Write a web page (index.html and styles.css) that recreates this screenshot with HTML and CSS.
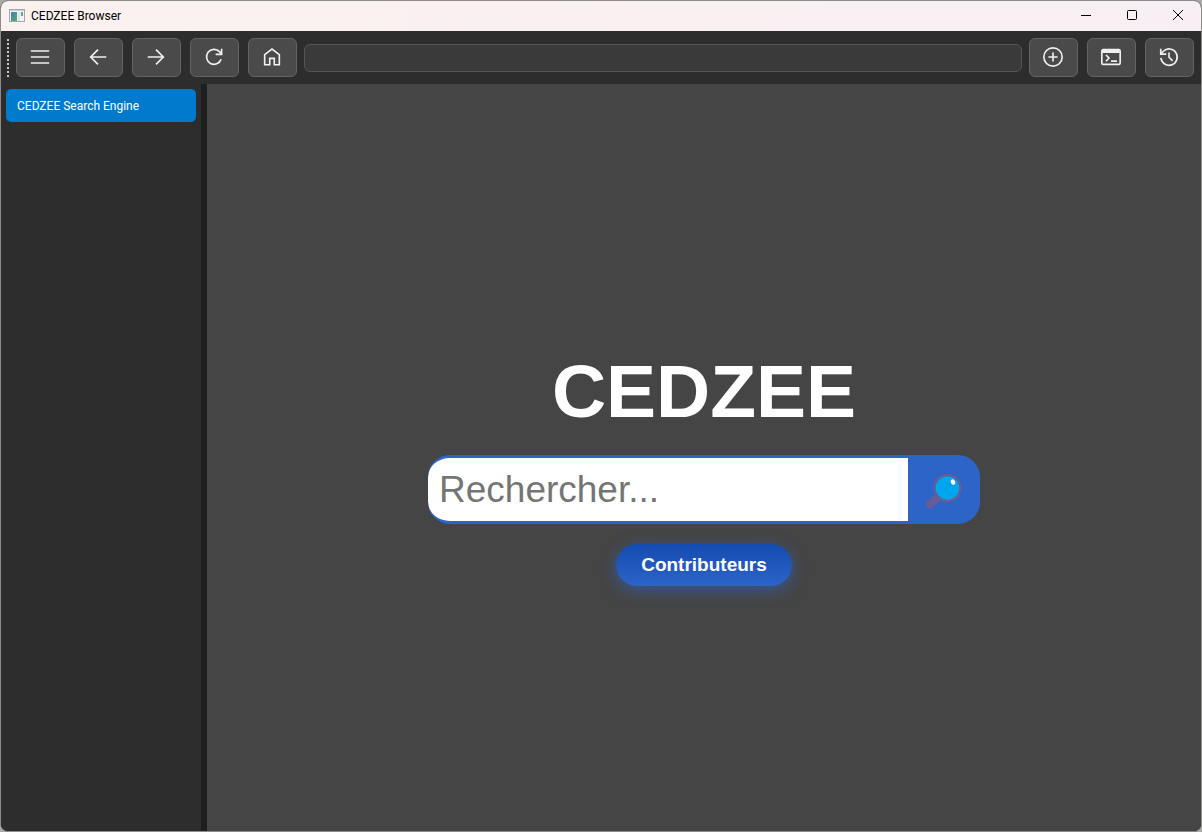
FILE: index.html
```html
<!DOCTYPE html>
<html lang="fr">
<head>
<meta charset="utf-8">
<title>CEDZEE Browser</title>
<link rel="stylesheet" href="styles.css">
</head>
<body>
<div class="window">
  <header class="titlebar">
    <svg class="app-icon" viewBox="0 0 16 14" aria-hidden="true">
      <defs><linearGradient id="app" x1="0" y1="0" x2="1" y2="1"><stop offset="0" stop-color="#4a78b8"/><stop offset="1" stop-color="#4fae6c"/></linearGradient></defs>
      <rect x=".5" y=".5" width="15" height="12" fill="#f4f4f4" stroke="#a2a8ae"/>
      <path d="M1 1.5h14" stroke="#c9ced3"/>
      <rect x="2" y="3" width="6" height="9" fill="url(#app)"/>
      <rect x="9" y="3" width="2" height="9" fill="#dfe3e6"/>
      <rect x="12" y="3" width="2" height="4" fill="#59a88a"/>
    </svg>
    <span class="title">CEDZEE Browser</span>
    <div class="controls">
      <button class="control" aria-label="Réduire"><svg viewBox="0 0 12 12"><path d="M1 5.5h10"/></svg></button>
      <button class="control" aria-label="Agrandir"><svg viewBox="0 0 12 12"><rect x="1.5" y=".5" width="9" height="9" rx="1"/></svg></button>
      <button class="control" aria-label="Fermer"><svg viewBox="0 0 12 12"><path d="M1 0l10 10M11 0L1 10"/></svg></button>
    </div>
  </header>
  <nav class="toolbar">
    <span class="grip"></span>
    <div class="group">
      <button class="tool" aria-label="Menu"><svg viewBox="0 0 24 24"><path d="M2 5.500h20M2 12h20M2 18.500h20"/></svg></button>
      <button class="tool" aria-label="Précédent"><svg viewBox="0 0 24 24"><path d="M21 12H4.500M12 4L4 12l8 8"/></svg></button>
      <button class="tool" aria-label="Suivant"><svg viewBox="0 0 24 24"><path d="M3 12h16.500M12 4l8 8-8 8"/></svg></button>
      <button class="tool" aria-label="Actualiser"><svg viewBox="0 0 24 24"><path d="M19.800 14.500A8.200 8.200 0 1 1 18 6.200L20 8.400M20.300 3v6.200h-6.500"/></svg></button>
      <button class="tool" aria-label="Accueil"><svg viewBox="0 0 24 24"><path d="M4 20.500V9.500L12 3.300l8 6.200v11h-5.500v-7h-5v7z"/></svg></button>
    </div>
    <input class="address" type="text" aria-label="Adresse">
    <div class="group">
      <button class="tool" aria-label="Nouvel onglet"><svg viewBox="0 0 24 24"><circle cx="12" cy="12" r="10"/><path d="M12 7v10M7 12h10"/></svg></button>
      <button class="tool" aria-label="Console"><svg viewBox="0 0 24 24"><rect x="2" y="4" width="20" height="16" rx="1.500"/><path d="M2.500 5.800h19" stroke-width="3.500"/><path d="M6.500 9.800l3.400 3.400-3.400 3.400M12 16.500h6.500"/></svg></button>
      <button class="tool" aria-label="Historique"><svg viewBox="0 0 24 24"><path d="M3.200 13a8.900 8.900 0 1 0 2.700-7.300L3.200 8.400M3 3v5.800H9M12 7v5.300l4 4"/></svg></button>
    </div>
  </nav>
  <div class="body">
    <aside class="sidebar">
      <button class="tab">CEDZEE Search Engine</button>
    </aside>
    <main class="page">
      <h1 class="heading">CEDZEE</h1>
      <form class="search">
        <input class="query" type="text" placeholder="Rechercher..." aria-label="Rechercher">
        <button class="submit" type="button" aria-label="Lancer la recherche">
          <svg viewBox="0 0 38 38" aria-hidden="true">
            <path d="M13 25L15.500 22.500" stroke="#675c9a" stroke-width="4"/>
            <path d="M11.500 26.500L5 32.500" stroke="#675c9a" stroke-width="8" stroke-linecap="round"/>
            <circle cx="22.500" cy="16" r="13" fill="#00a6ed" stroke="#675c9a" stroke-width="2.500"/>
            <ellipse cx="28" cy="10" rx="2.100" ry="2.800" fill="#fff" transform="rotate(-25 28 10)"/>
          </svg>
        </button>
      </form>
      <a class="contributors" href="#">Contributeurs</a>
    </main>
  </div>
</div>
</body>
</html>
```
FILE: styles.css
```css
* { box-sizing: border-box; }
body {
  margin: 0;
  background: #a9a9a6;
  font-family: Roboto, "Noto Sans", sans-serif;
}
button, input { font: inherit; margin: 0; }
.window {
  display: flex;
  flex-direction: column;
  height: 100vh;
  border: 1px solid #8c8c89;
  border-radius: 8px;
  overflow: hidden;
  background: #2d2d2d;
}
.titlebar {
  display: flex;
  align-items: center;
  height: 30px;
  padding-left: 8px;
  background: linear-gradient(90deg, #fbf1ef, #f8eff4);
  color: #000;
  font-size: 12px;
}
.app-icon { width: 16px; height: 14px; margin-right: 6px; }
.title { flex: 1; }
.controls { display: flex; }
.control {
  display: grid;
  place-items: center;
  width: 46px;
  height: 30px;
  padding: 0;
  border: 0;
  background: none;
}
.control svg { width: 12px; height: 12px; overflow: visible; fill: none; stroke: #000; }
.toolbar {
  display: flex;
  align-items: center;
  gap: 7px;
  height: 53px;
  padding: 0 7px 0 6px;
  background: #2d2d2d;
}
.grip {
  width: 2px;
  height: 38px;
  background: repeating-linear-gradient(#c8c8c8 0 2px, transparent 2px 4px);
}
.group { display: flex; gap: 9px; }
.tool {
  display: grid;
  place-items: center;
  width: 49px;
  height: 39px;
  padding: 0 1px 1px 0;
  border: 1px solid #646464;
  border-radius: 6px;
  background: #4a4a4a;
}
.tool svg {
  width: 22px;
  height: 22px;
  fill: none;
  stroke: #f0f0f0;
  stroke-width: 1.8;
}
.address {
  flex: 1;
  min-width: 0;
  height: 28px;
  padding: 0 8px;
  border: 1px solid #555;
  border-radius: 6px;
  background: #3a3a3a;
  color: #fff;
}
.body { display: flex; flex: 1; min-height: 0; }
.sidebar {
  width: 206px;
  padding: 5px;
  border-right: 6px solid #1e1e1e;
  background: #2d2d2d;
}
.tab {
  width: 100%;
  height: 33px;
  padding: 0 11px;
  border: 0;
  border-radius: 5px;
  background: #007acc;
  color: #fff;
  font-size: 12px;
  text-align: left;
}
.page {
  display: flex;
  flex: 1;
  flex-direction: column;
  align-items: center;
  justify-content: center;
  gap: 20px;
  background: #454545;
  font-family: "Liberation Sans", Arial, sans-serif;
}
.heading {
  margin: 0;
  padding: 19px 0 1px;
  color: #fff;
  font-size: 75px;
  line-height: 86px;
}
.search {
  display: flex;
  width: 552px;
  max-width: 100%;
  height: 69px;
  border-radius: 22px;
  overflow: hidden;
  background: #2c64c8;
}
.query {
  flex: 1;
  min-width: 0;
  padding: 0 11px;
  border: solid #2c64c8;
  border-width: 3px 0;
  border-radius: 22px 0 0 22px;
  background: #fff;
  font-size: 37px;
}
.query::placeholder { color: #757575; }
.submit {
  display: grid;
  place-items: center;
  width: 72px;
  padding: 3px 0 0;
  border: 0;
  background: none;
}
.submit svg { width: 38px; height: 38px; }
.contributors {
  padding: 0 25px;
  border-radius: 21px;
  background: linear-gradient(#144bb0, #2c64c8);
  box-shadow: 0 4px 15px rgba(44, 100, 200, .6);
  color: #fff;
  font-size: 19px;
  font-weight: 700;
  line-height: 42px;
  text-decoration: none;
}
```
